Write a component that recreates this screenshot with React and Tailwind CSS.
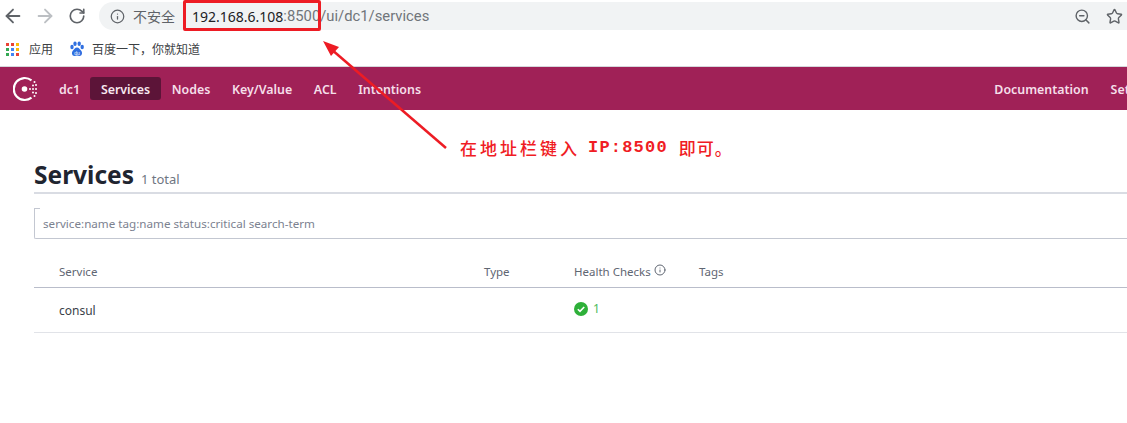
import React from 'react';
import { ArrowLeft, ArrowRight, RotateCw, Info, ZoomOut, Star } from 'lucide-react';

const cjk = '"Noto Sans","Noto Sans CJK SC",sans-serif';

function AppsGrid() {
  const colors = ['#ea4335', '#ea4335', '#fbbc05', '#34a853', '#4285f4', '#fbbc05', '#34a853', '#4285f4', '#ea4335'];
  return (
    <div className="grid grid-cols-3 gap-[2px] w-[13px]">
      {colors.map((c, i) => (
        <svg key={i} width="3" height="3"><rect width="3" height="3" fill={c} /></svg>
      ))}
    </div>
  );
}

function Paw() {
  return (
    <svg width="16" height="17" viewBox="0 0 16 17" fill="#2f6fe0">
      <ellipse cx="3" cy="6" rx="1.7" ry="2.2" />
      <ellipse cx="6" cy="2.8" rx="1.7" ry="2.3" />
      <ellipse cx="10.2" cy="2.8" rx="1.7" ry="2.3" />
      <ellipse cx="13.2" cy="6" rx="1.7" ry="2.2" />
      <path d="M8 6.5c2 0 3 2 4.200 3.300 1.500 1.700 1 5.200-1.700 5.200-1 0-1.600-.4-2.500-.4s-1.500.4-2.500.4c-2.700 0-3.200-3.500-1.700-5.200C5 8.500 6 6.500 8 6.500z" />
      <text x="8" y="13.500" fontSize="5" textAnchor="middle" fill="#fff" fontFamily="Liberation Sans">du</text>
    </svg>
  );
}

function ConsulLogo() {
  return (
    <svg width="26" height="26" viewBox="0 0 26 26" fill="#fff">
      <path d="M18.500 4.300A11 11 0 1 0 18.500 21.700" fill="none" stroke="#fff" strokeWidth="2.200" />
      <circle cx="11.500" cy="13" r="2.800" />
      <circle cx="17" cy="13" r="1" />
      <circle cx="20" cy="9.500" r="1" />
      <circle cx="23" cy="9" r="1" />
      <circle cx="20" cy="13" r="1" />
      <circle cx="23" cy="13" r="1" />
      <circle cx="20" cy="16.500" r="1" />
      <circle cx="23" cy="17" r="1" />
      <circle cx="21.500" cy="6" r="1" />
      <circle cx="21.500" cy="20" r="1" />
    </svg>
  );
}

function NavLink({ children, active }) {
  return (
    <a className={`h-[23px] flex items-center rounded-[3px] px-[10.800px] pt-[3px] text-[12.400px] font-semibold ${active ? 'bg-[#5c1438] text-[#f7e8ef]' : 'text-[#f5dfe9]'}`}>
      {children}
    </a>
  );
}

export default function App() {
  return (
    <div className="relative w-[1127px] h-[423px] overflow-hidden bg-white" style={{ fontFamily: cjk }}>
      {/* browser toolbar */}
      <div className="h-[33px] flex items-start pt-[2px]">
        <div className="w-[99px] h-[28px] flex items-center pl-[2px] gap-[10px] shrink-0">
          <ArrowLeft size={22} strokeWidth={2} className="text-[#5f6368]" />
          <ArrowRight size={22} strokeWidth={2} className="text-[#bcbfc3]" />
          <RotateCw size={18} strokeWidth={2.2} className="text-[#5f6368] ml-[2px]" />
        </div>
        <div className="flex-1 h-[28px] bg-[#f1f3f4] rounded-l-[14px] flex items-center pl-[11px] pr-[4px]">
          <Info size={15} className="text-[#5f6368]" />
          <span className="ml-[8px] text-[14px] text-[#5f6368]">不安全</span>
          <span className="ml-[17px] text-[14px] text-[#202124]">192.168.6.108</span>
          <span className="text-[14.800px] text-[#70757a]" style={{ fontFamily: 'Roboto,sans-serif' }}>:8500/ui/dc1/services</span>
          <ZoomOut size={17} className="text-[#5f6368] ml-auto" />
          <Star size={17} className="text-[#5f6368] ml-[15px]" />
        </div>
      </div>

      {/* bookmarks */}
      <div className="h-[33px] flex items-center pl-[6px] text-[12px] text-[#3c4043]">
        <AppsGrid />
        <span className="ml-[10px]">应用</span>
        <span className="ml-[16px]"><Paw /></span>
        <span className="ml-[7px]">百度一下，你就知道</span>
      </div>

      {/* consul nav */}
      <div className="h-[44px] border-t border-[#d5d7db] bg-[#a02157] flex items-center pl-[13px] whitespace-nowrap">
        <ConsulLogo />
        <span className="ml-[20px] pt-[3px] text-[12.400px] font-semibold text-[#f5dfe9]">dc1</span>
        <div className="ml-[10px] flex items-center">
          <NavLink active>Services</NavLink>
          <NavLink>Nodes</NavLink>
          <NavLink>Key/Value</NavLink>
          <NavLink>ACL</NavLink>
          <NavLink>Intentions</NavLink>
        </div>
        <div className="ml-auto flex items-center shrink-0 gap-[22px] mr-[-33px] pt-[3px] text-[12.400px] font-semibold text-[#f5dfe9]">
          <a>Documentation</a>
          <a>Settings</a>
        </div>
      </div>

      {/* page body */}
      <div className="pl-[34px]">
        <div className="h-[84px] flex items-end border-b-2 border-[#d9dce3]">
          <h1 className="text-[24.500px] font-bold text-[#1f2530] leading-[34px]">Services</h1>
          <span className="ml-[7px] mb-[3px] text-[13px] text-[#6f7682]">1 total</span>
        </div>
        <div className="relative mt-[14px] h-[31px] border-l border-b border-[#c3c7d1] rounded-bl-[2px] flex items-center pl-[8px] pt-[2px] text-[11.650px] text-[#7c8290]">
          <div className="absolute left-0 top-0 w-[5px] h-[1px] bg-[#c3c7d1]" />
          service:name tag:name status:critical search-term
        </div>

        <div className="mt-[24px] grid grid-cols-[450px_90px_125px_1fr] h-[25px] border-b border-[#b9bdca] text-[11.500px] text-[#5f6672]">
          <div className="pl-[25px]">Service</div>
          <div>Type</div>
          <div className="flex items-start gap-[3px]">
            Health Checks
            <Info size={12} className="mt-[1px] text-[#5f6672]" />
          </div>
          <div>Tags</div>
        </div>
        <div className="grid grid-cols-[450px_90px_125px_1fr] h-[45px] items-center border-b border-[#e1e3e8] text-[12px]">
          <div className="pl-[25px] pt-[1px] text-[#3a3f49]">consul</div>
          <div />
          <div className="flex items-center gap-[5px] text-[12px] text-[#4cbb5c] mb-[3px]">
            <svg width="14" height="14" viewBox="0 0 14 14">
              <circle cx="7" cy="7" r="7" fill="#2eb039" />
              <path d="M3.800 7.200l2.200 2.200 4.200-4.400" fill="none" stroke="#fff" strokeWidth="1.600" />
            </svg>
            1
          </div>
          <div />
        </div>
      </div>

      {/* red annotations on top of the screenshot */}
      <div className="absolute left-[183px] top-[0px] w-[138px] h-[31px] border-[3px] border-[#ed1c24] rounded-[2px]" />
      <svg className="absolute left-0 top-0 pointer-events-none" width="1127" height="423">
        <line x1="446" y1="148" x2="331" y2="49" stroke="#ed1c24" strokeWidth="2.500" />
        <path d="M323 41l16 6-8 9z" fill="#ed1c24" />
      </svg>
      <div
        className="absolute left-[460px] top-[136px] h-[24px] flex items-center text-[17px] font-medium text-[#f01c24] whitespace-pre"
        style={{ fontFamily: '"Noto Sans CJK SC",sans-serif' }}
      >
        <span className="tracking-[3px]">在地址栏键入</span>
        <span className="ml-[8px] font-bold tracking-[1.200px]" style={{ fontFamily: '"Liberation Mono",monospace' }}>IP:8500</span>
        <span className="ml-[11px] tracking-[1px] text-[17px] tracking-[1.500px]">即可。</span>
      </div>
    </div>
  );
}
